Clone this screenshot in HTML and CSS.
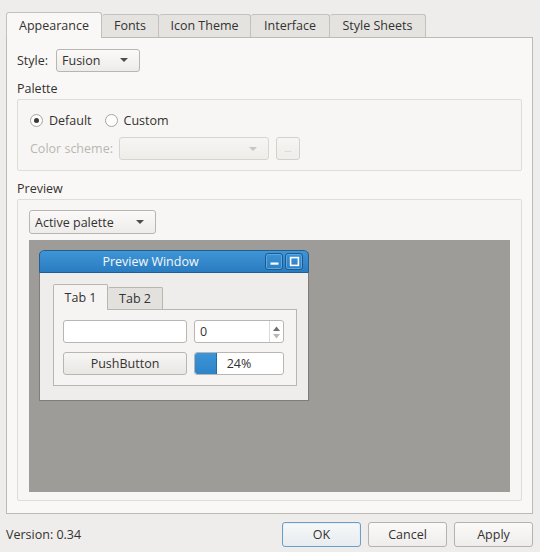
FILE: index.html
```html
<!DOCTYPE html>
<html>
<head>
<meta charset="utf-8">
<link rel="stylesheet" href="styles.css">
</head>
<body>
<div class="dialog">
  <div class="tabbar">
    <div class="tab active">Appearance</div>
    <div class="tab">Fonts</div>
    <div class="tab">Icon Theme</div>
    <div class="tab">Interface</div>
    <div class="tab">Style Sheets</div>
  </div>
  <div class="pane">
    <div class="style-row">
      <span class="lbl">Style:</span>
      <div class="combo style-combo"><span>Fusion</span><span class="arrow"></span></div>
    </div>
    <div class="gtitle">Palette</div>
    <div class="group palette">
      <div class="radios">
        <label class="radio"><span class="dot checked"></span>Default</label>
        <label class="radio"><span class="dot"></span>Custom</label>
      </div>
      <div class="scheme-row">
        <span class="disabled">Color scheme:</span>
        <div class="combo scheme-combo disabled-box"><span></span><span class="arrow light"></span></div>
        <div class="tool disabled-box">...</div>
      </div>
    </div>
    <div class="gtitle">Preview</div>
    <div class="group preview">
      <div class="combo palette-combo"><span>Active palette</span><span class="arrow"></span></div>
      <div class="canvas">
        <div class="win">
          <div class="titlebar">
            <span class="wtitle">Preview Window</span>
            <span class="wbtn"><svg width="11" height="11" viewBox="0 0 11 11"><rect x="1.5" y="6.5" width="8" height="2.2" fill="#fff"/></svg></span>
            <span class="wbtn"><svg width="11" height="11" viewBox="0 0 11 11"><rect x="1.6" y="1.6" width="7.8" height="7.8" fill="none" stroke="#fff" stroke-width="1.6"/></svg></span>
          </div>
          <div class="wbody">
            <div class="itabs">
              <div class="itab active">Tab 1</div>
              <div class="itab">Tab 2</div>
            </div>
            <div class="ipane">
              <div class="igrid">
                <div class="edit"></div>
                <div class="spin"><span>0</span><span class="spinarrows"><svg width="9" height="18" viewBox="0 0 9 18"><path d="M1 8 L4.5 3.5 L8 8 Z" fill="#707070"/><path d="M1 11 L4.5 15.5 L8 11 Z" fill="#b8b8b8"/></svg></span></div>
                <div class="pbtn">PushButton</div>
                <div class="progress"><div class="chunk"></div><span class="ptext">24%</span></div>
              </div>
            </div>
          </div>
        </div>
      </div>
    </div>
  </div>
  <div class="footer">
    <span class="version">Version: 0.34</span>
    <div class="buttons">
      <div class="btn default">OK</div>
      <div class="btn">Cancel</div>
      <div class="btn">Apply</div>
    </div>
  </div>
</div>
</body>
</html>
```
FILE: styles.css
```css
html, body {
  margin: 0;
  padding: 0;
  background: #efedeb;
}
body {
  font-family: "Open Sans", "DejaVu Sans", sans-serif;
  font-size: 12.5px;
  color: #333230;
  width: 540px;
  height: 552px;
  overflow: hidden;
}
.dialog {
  padding: 12px 7px 0 6px;
}
.tabbar {
  display: flex;
  align-items: flex-end;
  height: 25px;
  position: relative;
  z-index: 1;
}
.tab {
  line-height: 22px;
  border: 1px solid #c4c1bc;
  border-bottom: none;
  border-left: none;
  background: #e5e3e0;
  border-radius: 3px 3px 0 0;
  box-sizing: border-box;
  height: 23px;
  text-align: center;
  padding: 0;
}
.tab:first-child { border-left: 1px solid #c4c1bc; }
.tab.active {
  background: #faf8f6;
  height: 26px;
  line-height: 26px;
  margin-bottom: -1px;
  width: 96px;
}
.tab:nth-child(2) { width: 57px; }
.tab:nth-child(3) { width: 92px; }
.tab:nth-child(4) { width: 79px; }
.tab:nth-child(5) { width: 96px; }
.pane {
  border: 1px solid #bdbab5;
  background: #faf8f6;
  height: 477px;
  box-sizing: border-box;
  padding: 11px 10px 12px 10px;
  display: flex;
  flex-direction: column;
}
.style-row {
  display: flex;
  align-items: center;
  gap: 8px;
  height: 22px;
}
.combo {
  display: flex;
  align-items: center;
  justify-content: space-between;
  border: 1px solid #b9b6b1;
  border-radius: 3px;
  background: linear-gradient(#fbfaf9, #eeecea);
  box-sizing: border-box;
  padding: 0 11px 0 5px;
  height: 23px;
}
.arrow {
  width: 0; height: 0;
  border-left: 4px solid transparent;
  border-right: 4px solid transparent;
  border-top: 4px solid #4e4d4b;
}
.arrow.light { border-top-color: #c8c6c3; }
.style-combo { width: 84px; }
.gtitle {
  margin-top: 8px;
  height: 20px;
  line-height: 20px;
}
.group {
  border: 1px solid #e0ddd9;
  border-radius: 2px;
  background: #f8f6f4;
  box-sizing: border-box;
}
.palette {
  height: 72px;
  padding: 11px 12px 0 12px;
}
.radios {
  display: flex;
  gap: 13px;
  height: 18px;
  align-items: center;
}
.radio {
  display: flex;
  align-items: center;
  gap: 6px;
}
.dot {
  width: 13px; height: 13px;
  border-radius: 50%;
  border: 1px solid #a8a5a0;
  background: #fdfdfc;
  box-sizing: border-box;
  display: flex;
  align-items: center;
  justify-content: center;
}
.dot.checked::after {
  content: "";
  width: 5px; height: 5px;
  border-radius: 50%;
  background: #3a3937;
}
.scheme-row {
  display: flex;
  align-items: center;
  margin-top: 8px;
  height: 23px;
}
.disabled { color: #b9b6b2; }
.disabled-box {
  border-color: #d8d5d1;
  background: linear-gradient(#f6f5f3, #efedea);
}
.scheme-combo { width: 150px; margin-left: 6px; }
.tool {
  width: 24px; height: 23px;
  box-sizing: border-box;
  border: 1px solid #d4d1cd;
  border-radius: 3px;
  margin-left: 7px;
  color: #c4c1bd;
  font-size: 9px;
  text-align: center;
  line-height: 22px;
}
.preview {
  height: 302px;
  padding: 10px 11px 8px 11px;
  display: flex;
  flex-direction: column;
}
.palette-combo { width: 127px; height: 24px; }
.canvas {
  margin-top: 6px;
  flex: 1;
  background: #9d9c98;
  padding: 10px 10px;
}
.win {
  width: 270px;
  height: 151px;
  box-sizing: border-box;
  border: 1px solid #7f7d79;
  border-top: none;
  border-radius: 5px 5px 0 0;
  background: #efedeb;
  display: flex;
  flex-direction: column;
}
.titlebar {
  height: 23px;
  background: linear-gradient(#3f95d6, #2a7cc0);
  border: 1px solid #1f5f95;
  border-radius: 5px 5px 0 0;
  margin: 0 -1px;
  display: flex;
  align-items: center;
  padding: 0 5px 0 0;
  box-sizing: border-box;
}
.wtitle {
  flex: 1;
  text-align: center;
  color: #f4f8fb;
  padding-left: 4px;
  margin-right: 6px;
}
.wbtn {
  width: 18px; height: 17px;
  box-sizing: border-box;
  border: 1px solid #1c5a8e;
  box-shadow: inset 0 0 0 1px #5aa8e2;
  border-radius: 3px;
  margin-left: 2px;
  display: flex;
  align-items: center;
  justify-content: center;
}
.wbody {
  padding: 10px 11px 13px 13px;
}
.itabs {
  display: flex;
  align-items: flex-end;
  height: 26px;
  position: relative;
  z-index: 1;
}
.itab {
  width: 55px;
  height: 22px;
  line-height: 22px;
  box-sizing: border-box;
  text-align: center;
  border: 1px solid #b9b6b1;
  border-left: none;
  border-bottom: none;
  background: #e3e1de;
  border-radius: 2px 2px 0 0;
}
.itab.active {
  border-left: 1px solid #b9b6b1;
  background: #f6f4f2;
  height: 26px;
  line-height: 26px;
  margin-bottom: -1px;
}
.ipane {
  border: 1px solid #b9b6b1;
  background: #f6f4f2;
  height: 77px;
  box-sizing: border-box;
  padding: 10px 11px 0 9px;
}
.igrid {
  display: grid;
  grid-template-columns: 124px 90px;
  grid-auto-rows: 23px;
  column-gap: 7px;
  row-gap: 9px;
}
.edit, .spin, .progress {
  border: 1px solid #b9b6b1;
  border-radius: 3px;
  background: #ffffff;
  box-sizing: border-box;
}
.spin {
  display: flex;
  align-items: center;
  justify-content: space-between;
  padding: 0 1px 0 5px;
}
.spinarrows { display: flex; border-left: 1px solid #dcdad6; height: 21px; align-items: center; width: 12px; justify-content: center; }
.pbtn {
  border: 1px solid #b9b6b1;
  border-radius: 3px;
  background: linear-gradient(#f7f6f4, #e9e7e4);
  text-align: center;
  line-height: 21px;
  box-sizing: border-box;
}
.progress {
  display: grid;
  grid-template-columns: 1fr;
  grid-template-rows: 1fr;
  overflow: hidden;
  height: 23px;
}
.chunk {
  grid-area: 1 / 1;
  width: 21px;
  background: linear-gradient(#3b95d8, #2f84c8);
  border-right: 1px solid #246aa3;
  border-radius: 2px 0 0 2px;
}
.ptext {
  grid-area: 1 / 1;
  text-align: center;
  line-height: 21px;
}
.footer {
  display: flex;
  align-items: center;
  justify-content: space-between;
  height: 40px;
}
.buttons {
  display: flex;
  gap: 7px;
}
.btn {
  width: 79px;
  height: 25px;
  box-sizing: border-box;
  border: 1px solid #b5b2ad;
  border-radius: 3px;
  background: linear-gradient(#fbfaf9, #efedeb);
  text-align: center;
  line-height: 23px;
}
.btn.default {
  border-color: #6e9ec6;
  background: linear-gradient(#f6f8f9, #e8ecef);
  box-shadow: inset 0 0 0 1px #e4eef6;
}
```
